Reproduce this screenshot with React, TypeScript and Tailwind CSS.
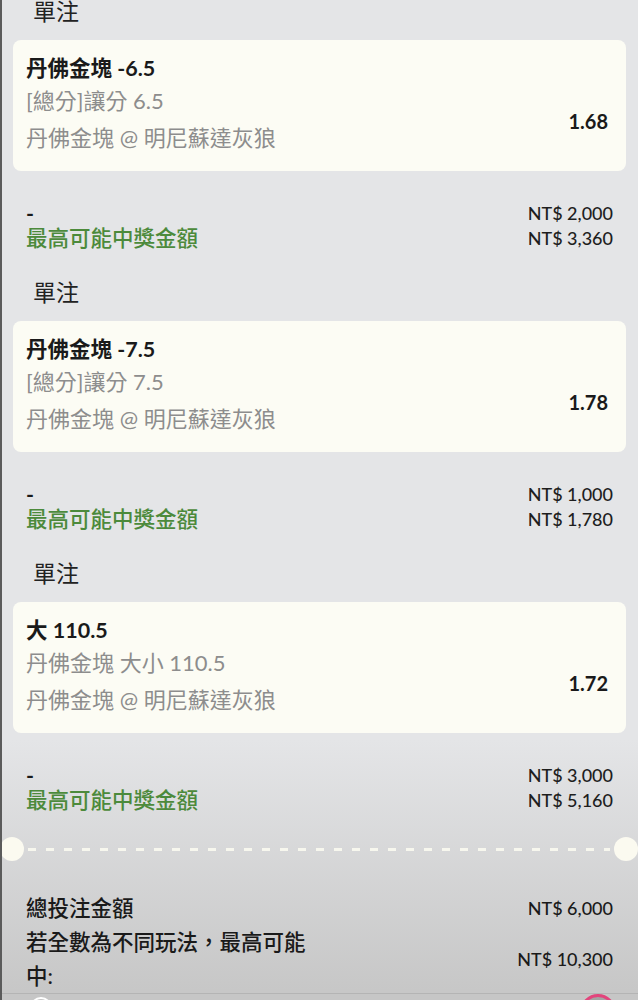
const bets = [
  { title: "丹佛金塊 -6.5", market: "[總分]讓分 6.5", odds: "1.68", stake: "NT$ 2,000", win: "NT$ 3,360" },
  { title: "丹佛金塊 -7.5", market: "[總分]讓分 7.5", odds: "1.78", stake: "NT$ 1,000", win: "NT$ 1,780" },
  { title: "大 110.5", market: "丹佛金塊 大小 110.5", odds: "1.72", stake: "NT$ 3,000", win: "NT$ 5,160" },
]

function BetSection({ b }: { b: (typeof bets)[number] }) {
  return (
    <div className="pb-[27px]">
      <div className="pl-[31px] text-[23px] leading-[28px] text-[#222]">單注</div>
      <div className="ml-[11px] mr-[12px] mt-[15px] flex h-[131px] justify-between rounded-lg bg-[#fcfcf4] pt-[13px] pl-[13px] pr-[18px]">
        <div>
          <div className="text-[21.5px] font-bold leading-[30px] text-[#1a1a1a]">{b.title}</div>
          <div className="mt-[3px] text-[22px] leading-[30px] text-[#8d8d8d]">{b.market}</div>
          <div className="mt-[7px] text-[22px] leading-[30px] text-[#8d8d8d]">丹佛金塊 @ 明尼蘇達灰狼</div>
        </div>
        <div className="mt-[54px] text-[20px] font-bold leading-[28px] text-[#1a1a1a]">{b.odds}</div>
      </div>
      <div className="mt-[30px] flex justify-between pl-[24px] pr-[25px]">
        <div className="text-[21.5px] leading-[25px]">
          <div className="font-bold text-[#1a1a1a]">-</div>
          <div className="font-medium text-[#4c8a3b]">最高可能中獎金額</div>
        </div>
        <div className="text-right text-[18px] font-medium leading-[25px] text-[#1e1e1e]">
          <div>{b.stake}</div>
          <div>{b.win}</div>
        </div>
      </div>
    </div>
  )
}

export default function App() {
  return (
    <div className="flex h-[1000px] w-[638px] flex-col overflow-hidden border-l-2 border-[#5b5b5b] bg-[linear-gradient(to_bottom,#e4e5e7_0%,#e4e5e7_74%,#c7c7c7_99%)] font-['Lato','Noto_Sans_CJK_TC',sans-serif]">
      <div className="-mt-[3px]">
        {bets.map((b) => (
          <BetSection key={b.odds} b={b} />
        ))}
      </div>

      {/* perforated divider */}
      <div className="-ml-[2px] -mt-[3px] flex h-[24px] items-center">
        <div className="h-[24px] w-[24px] shrink-0 rounded-full bg-[#fbfaf0]" />
        <div className="mx-[4px] h-[3px] flex-1 bg-[repeating-linear-gradient(to_right,#f7f7ee_0px,#f7f7ee_8px,transparent_8px,transparent_18px)]" />
        <div className="h-[24px] w-[24px] shrink-0 rounded-full bg-[#fbfaf0]" />
      </div>

      <div className="mt-[30px] pl-[24px] pr-[25px] text-[21.5px] font-medium leading-[34px] text-[#1a1a1a]">
        <div className="flex justify-between">
          <div>總投注金額</div>
          <div className="text-[18px]">NT$ 6,000</div>
        </div>
        <div className="flex items-center justify-between">
          <div className="w-[292px]">若全數為不同玩法，最高可能中:</div>
          <div className="text-[18px]">NT$ 10,300</div>
        </div>
      </div>

      <div className="mt-auto flex h-[8px] items-start justify-between overflow-hidden border-t border-[#b4b4b4] bg-[#c6c6c6] pl-[28px] pr-[22px]">
        <div className="mt-[3px] h-[22px] w-[22px] shrink-0 rounded-full border-2 border-white" />
        <div className="h-[36px] w-[36px] shrink-0 rounded-full border-[3px] border-[#e2457c] bg-[#a4a4a4]" />
      </div>
    </div>
  )
}
